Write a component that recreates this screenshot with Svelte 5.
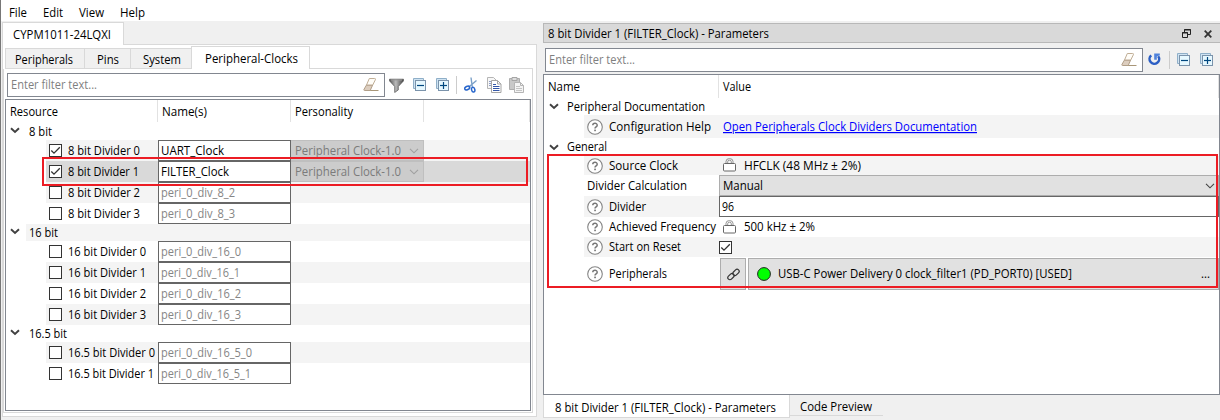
<script>
  const groups = [
    { name: '8 bit', w: 23, h: 18, alt: false, rows: [
      { n: '8 bit Divider 0', w: 72, v: 'UART_Clock', vw: 63, on: true, alt: true },
      { n: '8 bit Divider 1', w: 71, v: 'FILTER_Clock', vw: 68, on: true, sel: true },
      { n: '8 bit Divider 2', w: 72, v: 'peri_0_div_8_2', vw: 74, alt: true },
      { n: '8 bit Divider 3', w: 72, v: 'peri_0_div_8_3', vw: 74 }
    ] },
    { name: '16 bit', w: 29, h: 17, alt: true, rows: [
      { n: '16 bit Divider 0', w: 78, v: 'peri_0_div_16_0', vw: 80 },
      { n: '16 bit Divider 1', w: 78, v: 'peri_0_div_16_1', vw: 79, alt: true },
      { n: '16 bit Divider 2', w: 78, v: 'peri_0_div_16_2', vw: 80 },
      { n: '16 bit Divider 3', w: 78, v: 'peri_0_div_16_3', vw: 80, alt: true }
    ] },
    { name: '16.5 bit', w: 38, h: 17, alt: false, rows: [
      { n: '16.5 bit Divider 0', w: 87, v: 'peri_0_div_16_5_0', vw: 91, alt: true },
      { n: '16.5 bit Divider 1', w: 86, v: 'peri_0_div_16_5_1', vw: 90 }
    ] }
  ];
</script>

{#snippet t(text, w)}
  <svg class="t" width={w} height="16"><text x="0" y="12" textLength={w} lengthAdjust="spacingAndGlyphs">{text}</text></svg>
{/snippet}

{#snippet chev()}
  <svg class="chev" width="10" height="7" viewBox="0 0 10 7"><path d="M1 1.2 5 5 9 1.2" fill="none" stroke="#404040" stroke-width="1.9" /></svg>
{/snippet}

{#snippet thin(c)}
  <svg width="10" height="6" viewBox="0 0 10 6"><path d="M1 .8 5 4.8 9 .8" fill="none" stroke={c} stroke-width="1.1" /></svg>
{/snippet}

{#snippet check(on)}
  <svg class="check" width="13" height="13" viewBox="0 0 13 13"><rect x=".5" y=".5" width="12" height="12" fill="#fff" stroke="#333" />{#if on}<path d="M2.3 6.5 5 9.2 10.8 3.3" fill="none" stroke="#333" stroke-width="1.3" />{/if}</svg>
{/snippet}

{#snippet eraser()}
  <svg width="16" height="16" viewBox="0 0 16 16">
    <path d="M6.3 1.5h5.4q1.2 0 .7 1.2L9.6 8.3H3.4z" fill="#fffdf8" stroke="#c0ae96" />
    <path d="M3.4 8.2h6.2L7.2 13.5H1.6q-1.1 0-.6-1.2z" fill="#dccdbe" stroke="#b19f88" />
    <path d="M7.2 13.5h8.3" stroke="#a89678" />
  </svg>
{/snippet}

{#snippet boxes(plus)}
  <svg width="14" height="14" viewBox="0 0 14 14">
    <path d="M.5 10.5V.5h10v2h-8v8z" fill="#cfe3f2" stroke="#8fafc8" />
    <rect x="2.5" y="2.5" width="10" height="10" fill="#e6f8ff" stroke="#7b93ab" />
    <path d="M4 7.5h7" stroke="#00477f" stroke-width="1.2" />
    {#if plus}<path d="M7.5 4v7" stroke="#00477f" stroke-width="1.2" />{/if}
  </svg>
{/snippet}

{#snippet help()}
  <svg class="help" width="16" height="16" viewBox="0 0 16 16"><circle cx="8" cy="8" r="7.3" fill="#fff" stroke="#858585" stroke-width="1.1" /><path d="M5.8 6.3C5.8 3.6 10.2 3.6 10.2 6.2 10.2 7.8 8 7.8 8 9.5" fill="none" stroke="#777" stroke-width="1.5" /><rect x="7.2" y="10.6" width="1.7" height="1.6" fill="#777" /></svg>
{/snippet}

{#snippet lock()}
  <svg class="lock" width="13" height="15" viewBox="0 0 13 15"><path d="M3 5.5V3.3Q3 .6 6.5.6T10 3.3V5.5M4.7 5.5V3.8Q4.7 2.2 6.5 2.2T8.3 3.8V5.5" fill="none" stroke="#888" stroke-width=".9" /><rect x=".5" y="5.5" width="12" height="7.5" rx="1" fill="#fff" stroke="#666" /></svg>
{/snippet}

<div class="app">
  <nav class="menu">
    {@render t('File', 18)}{@render t('Edit', 20)}{@render t('View', 25)}{@render t('Help', 25)}
  </nav>
  <main>
    <section class="left">
      <div class="device"><div class="dtab">{@render t('CYPM1011-24LQXI', 98)}</div></div>
      <div class="pane">
        <div class="tabs">
          <div class="tab a">{@render t('Peripherals', 58)}</div>
          <div class="tab b">{@render t('Pins', 22)}</div>
          <div class="tab c">{@render t('System', 38)}</div>
          <div class="tab cur">{@render t('Peripheral-Clocks', 93)}</div>
          <div class="rest"></div>
        </div>
        <div class="inner">
          <div class="tools">
            <div class="filter">{@render t('Enter filter text...', 86)}{@render eraser()}</div>
            <svg class="funnel" width="15" height="15" viewBox="0 0 15 15">
              <defs><linearGradient id="fg"><stop stop-color="#555" /><stop offset=".45" stop-color="#bbb" /><stop offset="1" stop-color="#444" /></linearGradient></defs>
              <path d="M.5 1.2h14v1.7L9.3 8.5v3.4l-3.6 2.6v-6L.5 2.9z" fill="url(#fg)" stroke="#555" stroke-width=".7" /><path d="M2 2h11" stroke="#999" />
            </svg>
            {@render boxes(false)}
            {@render boxes(true)}
            <i class="sep"></i>
            <svg class="cut" width="14" height="16" viewBox="0 0 14 16">
              <path d="M7 .5 8.3 10M12.5 3.5 4.5 10.3" stroke="#7ba0c8" stroke-width="1.4" />
              <ellipse cx="3.2" cy="11" rx="2.6" ry="1.7" transform="rotate(-25 3.2 11)" fill="none" stroke="#2866cc" stroke-width="1.5" /><ellipse cx="9.2" cy="12.7" rx="1.6" ry="2.4" transform="rotate(-15 9.2 12.7)" fill="none" stroke="#2866cc" stroke-width="1.5" />
            </svg>
            <svg class="copy" width="15" height="16" viewBox="0 0 15 16">
              <path d="M.5.5h6l3 3v8h-9z" fill="#f7f7f7" stroke="#b5b5b5" /><path d="M2 4.5h2M2 6.5h2M2 8.5h2" stroke="#8d9ec8" />
              <path d="M4.5 3.5h6l3.5 3.5v8.5H4.5z" fill="#fff" stroke="#a5a5a5" /><path d="M10.5 3.5V7H14" fill="none" stroke="#a5a5a5" /><path d="M6 7.5h3M6 9.5h6.5M6 11.5h6.5M6 13.5h6.5" stroke="#3457a8" />
            </svg>
            <svg class="paste" width="15" height="16" viewBox="0 0 15 16">
              <path d="M.5 1.5h10v11H.5z" fill="#c8c8c8" stroke="#adadad" /><path d="M3 .5h5v3H3z" fill="#ddd" stroke="#a5a5a5" />
              <path d="M5.5 5.5h6l3 3v7h-9z" fill="#f4f4f4" stroke="#b5b5b5" /><path d="M11.5 5.5v3h3" fill="none" stroke="#b5b5b5" /><path d="M7 9.5h4M7 11.5h6M7 13.5h6" stroke="#c4c4c4" />
            </svg>
          </div>
          <div class="tree">
            <div class="thead"><div class="h1">{@render t('Resource', 48)}</div><div class="h2">{@render t('Name(s)', 45)}</div><div class="h2">{@render t('Personality', 58)}</div><div class="h3"></div></div>
            {#each groups as g}
              <div class="group" style:height="{g.h}px">{@render chev()}<div class="gname" class:alt={g.alt}>{@render t(g.name, g.w)}</div></div>
              {#each g.rows as r}
                <div class="row" class:alt={r.alt} class:sel={r.sel}>
                  <div class="rname">{@render check(r.on)}{@render t(r.n, r.w)}</div>
                  <div class="edit" class:dim={!r.on}>{@render t(r.v, r.vw)}</div>
                  {#if r.on}<div class="pers">{@render t('Peripheral Clock-1.0', 106)}{@render thin('#a0a0a0')}</div>{/if}
                </div>
              {/each}
            {/each}
            <div class="mark one"></div>
          </div>
        </div>
      </div>
    </section>

    <section class="right">
      <header>{@render t('8 bit Divider 1 (FILTER_Clock) - Parameters', 221)}
        <svg class="float" width="9" height="9" viewBox="0 0 9 9"><path d="M2.5 3V.5h6v5H6M2 1h7" fill="none" stroke="#222" /><path d="M.5 3.5h5v5h-5zM0 4h6" fill="none" stroke="#222" /></svg>
        <svg width="8" height="8" viewBox="0 0 8 8"><path d="m.7.7 6.6 6.6m0-6.6L.7 7.3" stroke="#333" stroke-width="1.8" /></svg>
      </header>
      <div class="rtools">
        <div class="filter">{@render t('Enter filter text...', 86)}{@render eraser()}</div>
        <svg class="reset" width="13" height="13" viewBox="0 0 13 13"><path d="M3.2 2.4A4.8 4.8 0 1 0 10.2 3.2" fill="none" stroke="#2c5fc4" stroke-width="2.5" /><path d="M6.2.4h5.6v1.8L8.8 3.6v3.2H6.2z" fill="#4f82dc" /></svg>
        <i class="sep"></i>
        {@render boxes(false)}
        {@render boxes(true)}
      </div>
      <div class="params">
        <div class="phead"><div>{@render t('Name', 32)}</div><div>{@render t('Value', 28)}</div></div>
        <div class="pg first">{@render chev()}{@render t('Peripheral Documentation', 138)}</div>
        <div class="p alt doc"><div class="pn">{@render help()}{@render t('Configuration Help', 102)}</div><div class="pv link">{@render t('Open Peripherals Clock Dividers Documentation', 254)}</div></div>
        <div class="pg">{@render chev()}{@render t('General', 40)}</div>
        <div class="p alt src"><div class="pn">{@render help()}{@render t('Source Clock', 69)}</div><div class="pv">{@render lock()}{@render t('HFCLK (48 MHz ± 2%)', 117)}</div></div>
        <div class="p h21"><div class="pn">{@render t('Divider Calculation', 100)}</div><div class="pv combo">{@render t('Manual', 40)}{@render thin('#444')}</div></div>
        <div class="p alt h21"><div class="pn">{@render help()}{@render t('Divider', 37)}</div><div class="pv num">{@render t('96', 12)}</div></div>
        <div class="p h20"><div class="pn">{@render help()}{@render t('Achieved Frequency', 107)}</div><div class="pv">{@render lock()}{@render t('500 kHz ± 2%', 71)}</div></div>
        <div class="p alt h20"><div class="pn">{@render help()}{@render t('Start on Reset', 72)}</div><div class="pv box">{@render check(true)}</div></div>
        <div class="p h34"><div class="pn">{@render help()}{@render t('Peripherals', 58)}</div>
          <div class="pv btns">
            <div class="btn chain"><svg width="13" height="13" viewBox="0 0 13 13"><g fill="none" stroke="#333" stroke-width="1.2"><rect x="5.4" y="2.3" width="7.2" height="4.2" rx="2.1" transform="rotate(-45 9 4.4)" /><rect x=".4" y="6.5" width="7.2" height="4.2" rx="2.1" transform="rotate(-45 4 8.6)" /></g></svg></div>
            <div class="btn main"><svg width="14" height="14" viewBox="0 0 14 14"><circle cx="7" cy="7" r="6.4" fill="#0f0" stroke="#222" /></svg>{@render t('USB-C Power Delivery 0 clock_filter1 (PD_PORT0) [USED]', 294)}<span class="dots">{@render t('...', 9)}</span></div>
          </div>
        </div>
        <div class="mark two"></div>
      </div>
      <footer><div class="ft">{@render t('8 bit Divider 1 (FILTER_Clock) - Parameters', 221)}</div><div class="cp">{@render t('Code Preview', 72)}</div></footer>
    </section>
  </main>
</div>

<style>
  :global(body) { background: #f0f0f0; overflow: hidden; }
  .app, .app * { box-sizing: border-box; }
  .app { width: 1220px; height: 420px; border-left: 1px solid #777; background: #f0f0f0; font: 12px "Open Sans", "Noto Sans", sans-serif; color: #000; display: flex; flex-direction: column; }
  svg { display: block; flex: none; }
  .t { overflow: visible; }
  .t text { fill: currentColor; }
  .menu { height: 22px; background: #fff; display: flex; padding: 5px 0 0 8px; gap: 16px; }
  main { flex: 1; display: flex; }
  .left { width: 536px; padding: 1px 0 3px 1px; display: flex; flex-direction: column; }
  .device { height: 23px; border-bottom: 1px solid #d9d9d9; }
  .dtab { height: 23px; width: 122px; background: #fff; border: 1px solid #d9d9d9; border-bottom: 0; padding: 4px 0 0 10px; }
  .pane { flex: 1; background: #fff; border: 1px solid #d9d9d9; border-top: 0; padding: 1px 3px 3px 0; display: flex; flex-direction: column; }
  .tabs { display: flex; align-items: flex-end; height: 23px; padding-left: 2px; }
  .tab { background: #f0f0f0; border: 1px solid #d9d9d9; border-right: 0; height: 21px; padding-top: 3px; }
  .a { width: 79px; padding-left: 9px; }
  .b { width: 46px; padding-left: 12px; }
  .c { width: 61px; padding-left: 12px; }
  .cur { width: 119px; height: 23px; background: #fff; border-right: 1px solid #d9d9d9; border-bottom: 0; padding: 4px 0 0 13px; }
  .rest { flex: 1; border-bottom: 1px solid #d9d9d9; }
  .inner { flex: 1; border: 1px solid #d9d9d9; border-top: 0; padding: 4px 1px 1px 1px; display: flex; flex-direction: column; }
  .tools { display: flex; align-items: center; height: 24px; padding-left: 2px; }
  .filter { height: 24px; width: 378px; border: 1px solid #828790; background: #fff; display: flex; align-items: center; justify-content: space-between; padding: 0 5px 0 3px; color: #7f7f7f; }
  .funnel { margin: 0 9px 0 4px; }
  .tools .sep { margin: 0 7px 0 6px; }
  .sep { width: 1px; height: 18px; background: #ccc; }
  .tools .funnel + svg { margin-right: 9px; }
  .copy { margin: 0 7px 0 9px; }
  .tree { position: relative; margin-top: 2px; height: 312px; border: 1px solid #828790; background: #fff; }
  .thead { height: 22px; display: flex; }
  .thead div { padding-top: 4px; border-right: 1px solid #e2e2e2; }
  .thead .h1 { width: 152px; padding-left: 4px; }
  .thead .h2 { width: 133px; padding-left: 4px; }
  .thead .h3 { flex: 1; }
  .group { display: flex; align-items: center; padding-left: 4px; }
  .gname { margin-left: 6px; flex: 1; padding: 1px 0 0 3px; height: 100%; display: flex; align-items: center; }
  .group .chev { margin-top: -2px; }
  .alt { background: #f4f4f4; }
  .row { height: 21px; margin-left: 40px; display: flex; }
  .rname { width: 112px; padding-left: 3px; display: flex; align-items: center; gap: 6px; }
  .edit { width: 133px; border: 1px solid #666; background: #fff; display: flex; align-items: center; padding-left: 2px; }
  .dim { color: #858585; }
  .sel { background: #d9d9d9; }
  .pers { width: 133px; background: #ccc; border: 1px solid #bfbfbf; border-left: 0; color: #7b7b7b; display: flex; align-items: center; justify-content: space-between; padding: 0 4px; }
  .mark { position: absolute; border: 2px solid #ec1c24; }
  .one { left: 36px; top: 57px; width: 486px; height: 29px; }
  .right { flex: 1; padding: 2px 0 0 6px; display: flex; flex-direction: column; }
  header { height: 20px; background: #d9d9d9; border: 1px solid #b8b8b8; border-right: 0; display: flex; align-items: center; padding: 1px 8px 0 4px; }
  .float { margin-left: auto; margin-right: 13px; }
  .rtools { display: flex; align-items: center; height: 31px; padding: 2px 0 0 2px; }
  .rtools .filter { width: 598px; }
  .reset { margin: 0 8px 0 5px; }
  .rtools .sep { margin-right: 7px; }
  .rtools .sep + svg { margin-right: 9px; }
  .params { position: relative; height: 321px; border: 1px solid #828790; background: #fff; }
  .phead { display: flex; height: 23px; }
  .phead div { width: 175px; padding: 4px 0 0 4px; border-right: 1px solid #e2e2e2; }
  .phead div + div { flex: 1; }
  .pg { height: 18px; display: flex; align-items: center; gap: 8px; padding-left: 5px; }
  .pg.first { height: 17px; }
  .p { margin-left: 40px; display: flex; }
  .pn { width: 135px; padding-left: 3px; display: flex; align-items: center; gap: 6px; }
  .pv { flex: 1; display: flex; align-items: center; padding-left: 4px; gap: 8px; }
  .doc { height: 23px; }
  .src { height: 19px; }
  .h21 { height: 21px; }
  .h20 { height: 20px; }
  .h34 { height: 34px; }
  .link { color: #00f; }
  .link :global(text) { text-decoration: underline; }
  .combo { background: #e1e1e1; border: 1px solid #adadad; padding: 0 3px; justify-content: space-between; }
  .num { background: #fff; border: 1px solid #666; padding-left: 2px; }
  .box { padding-left: 0; }
  .btns { padding: 0 0 0 1px; gap: 2px; }
  .btn { height: 32px; background: #e1e1e1; border: 1px solid #adadad; display: flex; align-items: center; }
  .chain { width: 26px; justify-content: center; }
  .main { flex: 1; padding: 0 8px; gap: 7px; }
  .dots { margin-left: auto; }
  .two { left: 3px; top: 79px; width: 671px; height: 134px; }
  footer { display: flex; }
  .ft { width: 247px; height: 23px; background: #fff; border: 1px solid #d9d9d9; border-top: 0; padding: 5px 0 0 11px; }
  .cp { width: 93px; height: 21px; border-bottom: 1px solid #d9d9d9; padding: 4px 0 0 10px; }
</style>
